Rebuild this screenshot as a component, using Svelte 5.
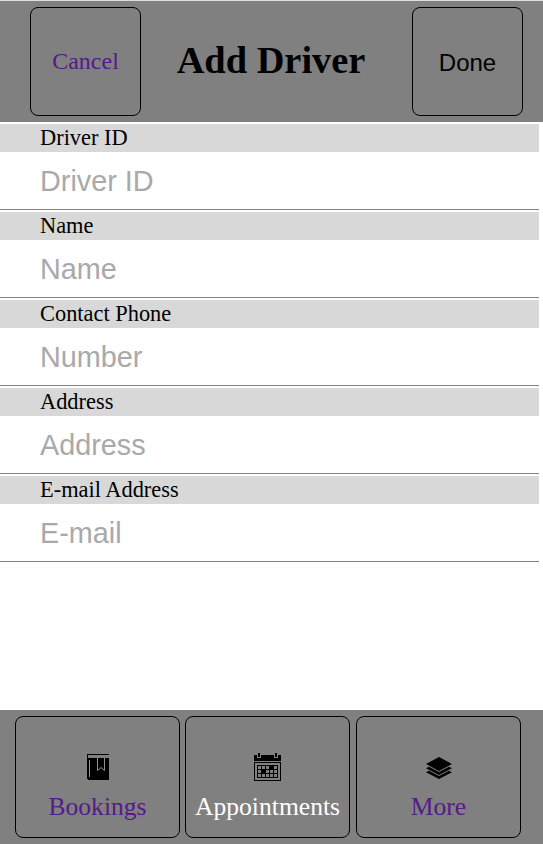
<script>
  const fields = [
    { label: 'Driver ID', placeholder: 'Driver ID', type: 'text' },
    { label: 'Name', placeholder: 'Name', type: 'text' },
    { label: 'Contact Phone', placeholder: 'Number', type: 'tel' },
    { label: 'Address', placeholder: 'Address', type: 'text' },
    { label: 'E-mail Address', placeholder: 'E-mail', type: 'email' }
  ];
</script>

<div class="page">
  <header>
    <a class="box" href="#cancel">Cancel</a>
    <h1>Add Driver</h1>
    <button class="box" type="button">Done</button>
  </header>

  <form>
    {#each fields as field, i}
      <div class="field">
        <label for={`field-${i}`}>{field.label}</label>
        <input id={`field-${i}`} type={field.type} placeholder={field.placeholder} />
      </div>
    {/each}
  </form>

  <nav>
    <a class="tab" href="#bookings">
      <svg width="27" height="28" viewBox="0 0 27 28" shape-rendering="crispEdges">
        <path d="M3 2V1h22v1H4v3h21v22H4l-1-1z" />
        <path d="M5 7h1v17H5z" fill="#909090" />
        <path d="M13.5 5v12.5l3.5-3 3.5 3V5" fill="none" stroke="#909090" shape-rendering="auto" />
      </svg>
      <span>Bookings</span>
    </a>
    <a class="tab current" href="#appointments">
      <svg width="27" height="28" viewBox="0 0 27 28" shape-rendering="crispEdges">
        <path d="M0 2h3v3h4V2h13v3h4V2h3v6H0zM4 0h2v4H4zM21 0h2v4h-2z" />
        <path fill-rule="evenodd" d="M0 9h27v19H0zM1 10v17h25V10z" />
        <path
          fill-rule="evenodd"
          d="M3 12h21v13H3zM4 13v3h3v-3zM8 13v3h3v-3zM12 13v3h3v-3zM20 13v3h3v-3zM4 17v3h3v-3zM12 17v3h3v-3zM16 17v3h3v-3zM20 17v3h3v-3zM4 21v3h3v-3zM8 21v3h3v-3zM12 21v3h3v-3zM16 21v3h3v-3zM20 21v3h3v-3z"
        />
      </svg>
      <span>Appointments</span>
    </a>
    <a class="tab" href="#more">
      <svg width="28" height="28" viewBox="0 0 28 28">
        <path d="M14 4 27 11 14 18 1 11z" />
        <path d="M1 15.2 4 13.7 14 19 24 13.7 27 15.2 14 22z" />
        <path d="M1 19.3 4 17.8 14 23 24 17.8 27 19.3 14 26z" />
      </svg>
      <span>More</span>
    </a>
  </nav>
</div>

<style>
  :global(body) {
    margin: 0;
    background: #fff;
  }
  .page {
    box-sizing: border-box;
    height: 844px;
    display: flex;
    flex-direction: column;
    overflow: hidden;
    border-top: 1px solid #dcdfdf;
    font-family: 'Liberation Serif', 'Times New Roman', serif;
    color: #000;
  }
  header {
    box-sizing: border-box;
    height: 121px;
    padding: 6px 20px 6px 30px;
    display: flex;
    justify-content: space-between;
    background: #808080;
    flex: none;
  }
  .box {
    box-sizing: border-box;
    width: 111px;
    height: 109px;
    padding: 0;
    display: flex;
    align-items: center;
    justify-content: center;
    border: 1px solid #000;
    border-radius: 8px;
    background: transparent;
    font-size: 24px;
    color: #551a8b;
    text-decoration: none;
  }
  button.box {
    padding-top: 3px;
    font-family: 'Liberation Sans', Arial, sans-serif;
    color: #000;
  }
  h1 {
    margin: 0;
    padding-right: 11px;
    font-size: 38.4px;
    line-height: 107px;
    white-space: nowrap;
  }
  form {
    flex: 1;
    padding: 2px 4px 0 0;
  }
  .field {
    display: flex;
    flex-direction: column;
    margin-bottom: 2px;
  }
  label {
    height: 28px;
    padding-left: 40px;
    background: #d8d8d8;
    font-size: 22.4px;
    line-height: 28px;
  }
  input {
    box-sizing: border-box;
    height: 58px;
    padding: 2px 0 0 40px;
    border: 0;
    border-bottom: 1px solid #808080;
    border-radius: 0;
    outline: 0;
    background: #fff;
    font-family: 'Liberation Sans', Arial, sans-serif;
    font-size: 28.8px;
  }
  input::placeholder {
    color: #a9a9a9;
    opacity: 1;
  }
  nav {
    box-sizing: border-box;
    height: 134px;
    padding: 6px 22px 6px 15px;
    display: flex;
    gap: 5px;
    background: #808080;
    flex: none;
  }
  .tab {
    box-sizing: border-box;
    width: 165px;
    height: 122px;
    padding-top: 36px;
    display: flex;
    flex-direction: column;
    align-items: center;
    border: 1px solid #000;
    border-radius: 8px;
    font-size: 25.6px;
    line-height: 30px;
    color: #551a8b;
    text-decoration: none;
  }
  .tab:last-child {
    margin-left: auto;
  }
  .tab.current {
    color: #fff;
  }
  .tab span {
    margin-top: 11px;
  }
  svg {
    display: block;
    fill: #000;
  }
</style>
